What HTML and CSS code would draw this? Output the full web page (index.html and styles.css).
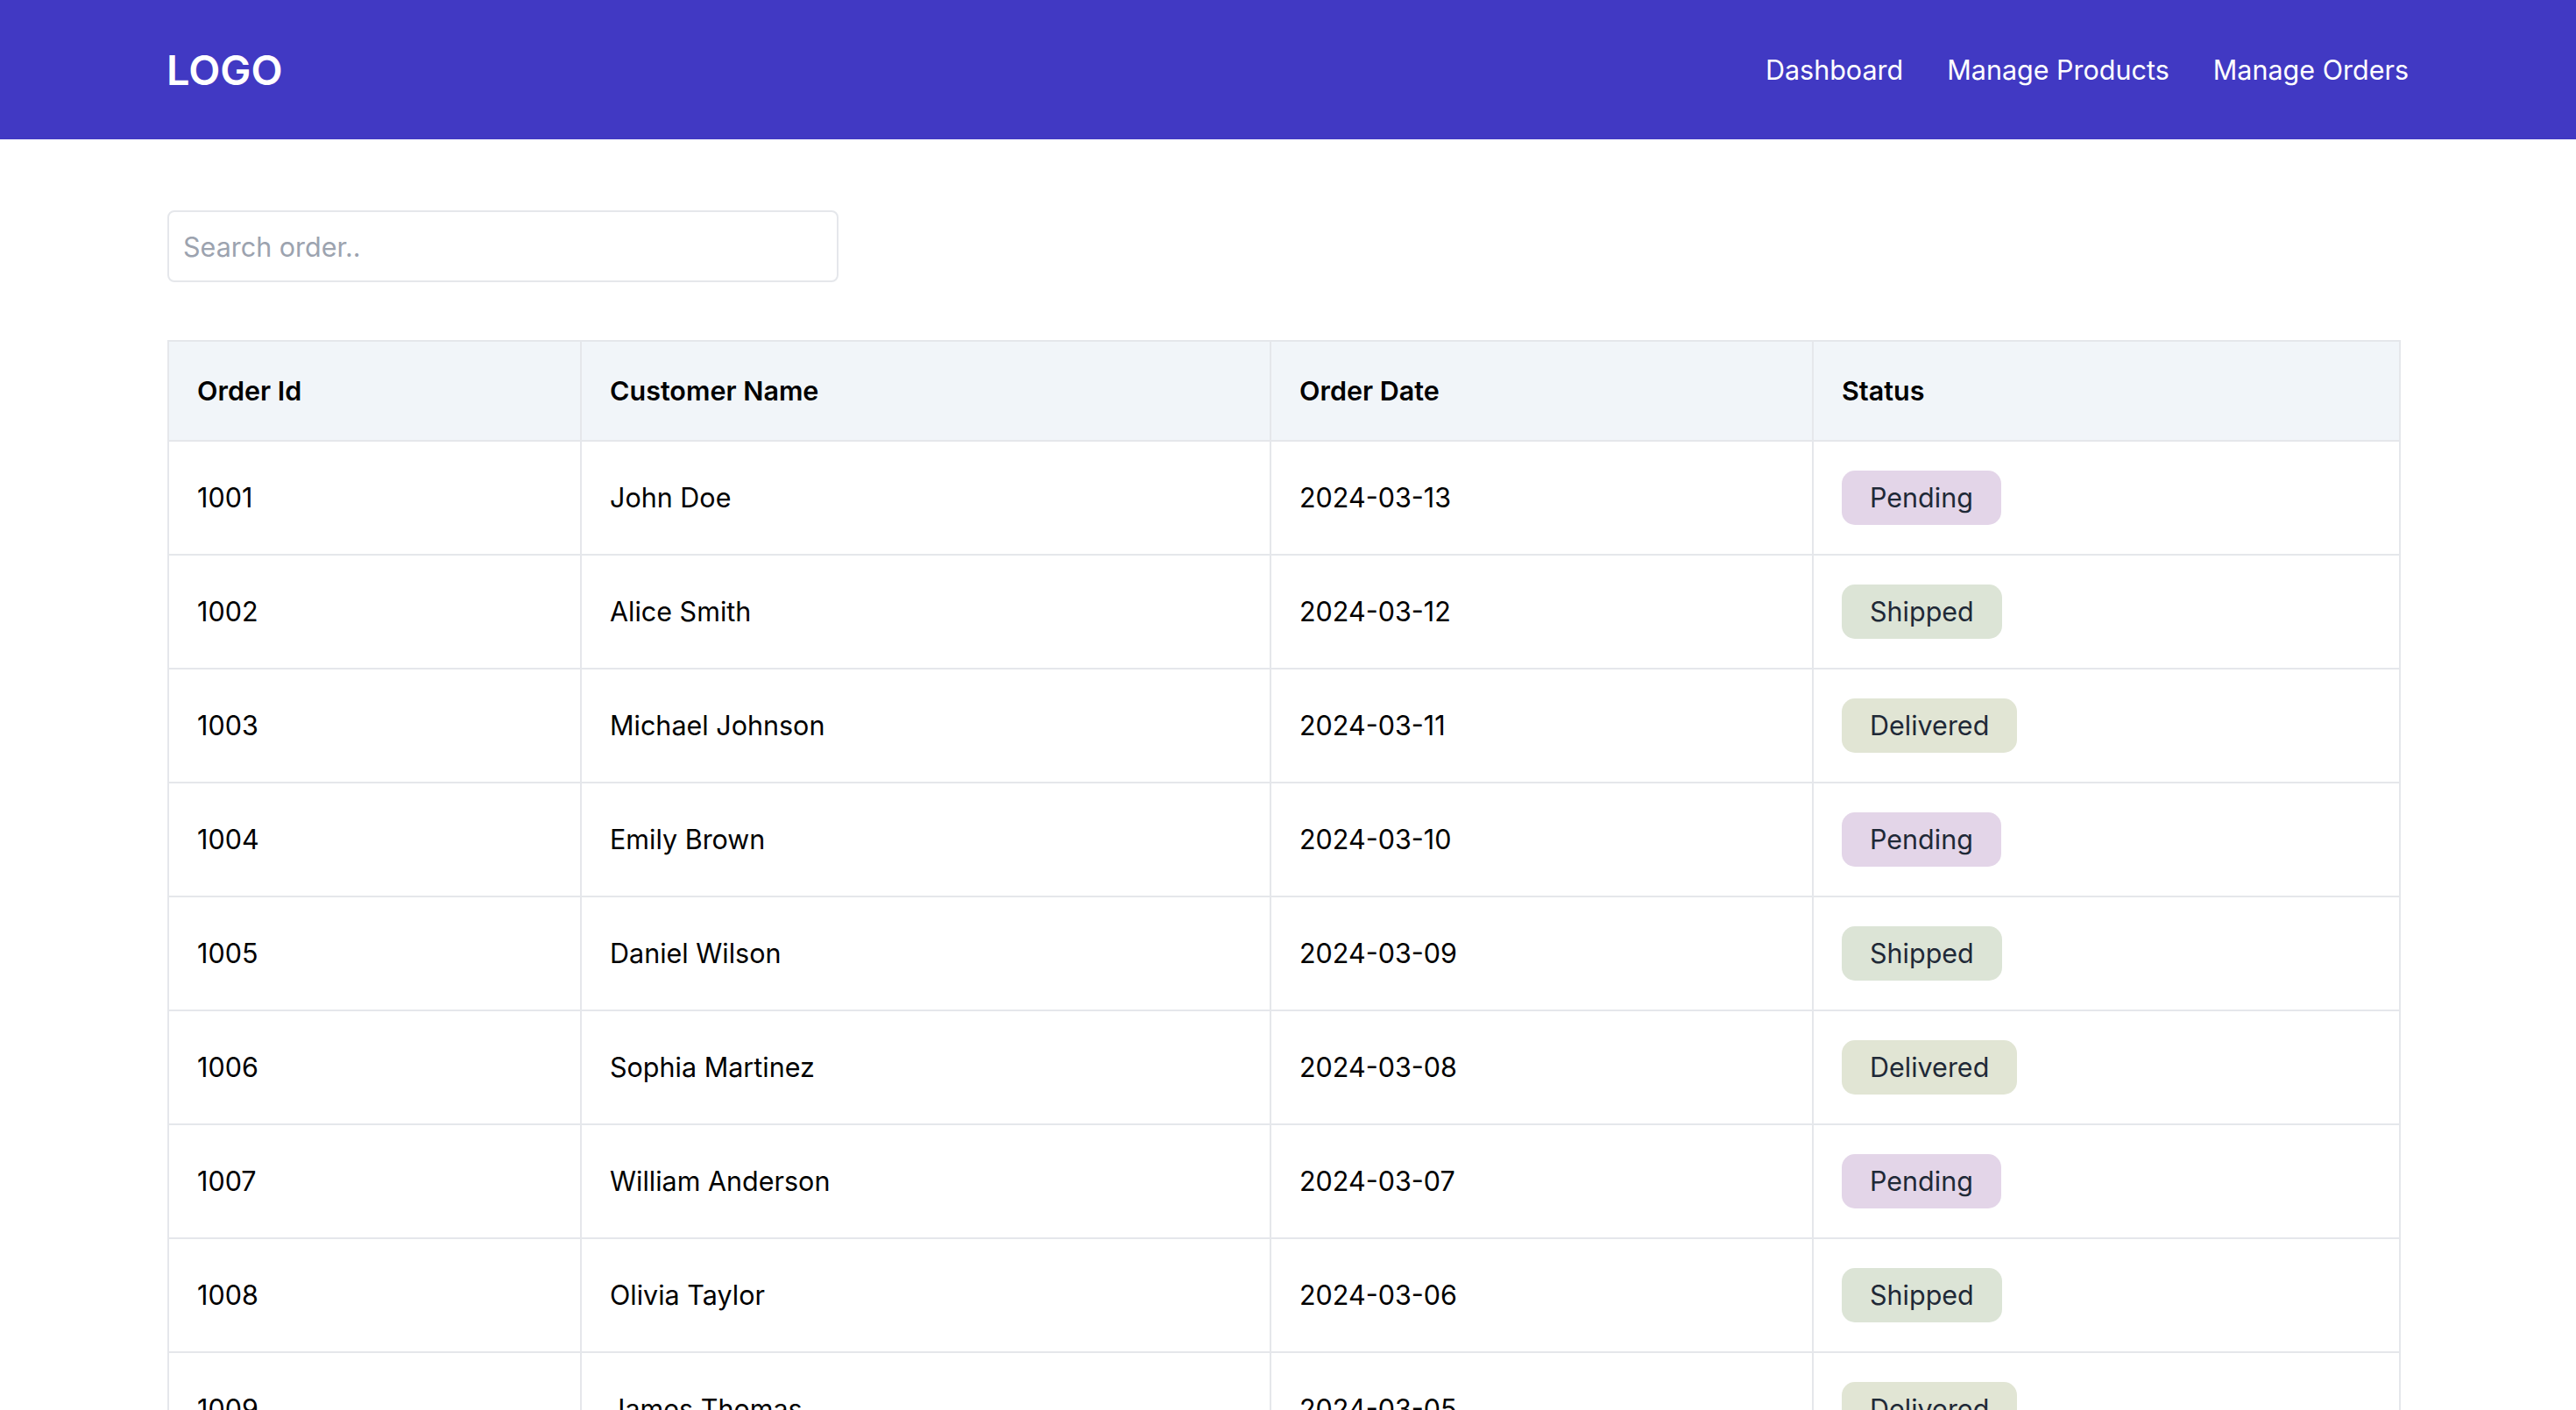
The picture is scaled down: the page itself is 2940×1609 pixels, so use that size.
FILE: index.html
```html
<!DOCTYPE html>
<html lang="en">
<head>
<meta charset="utf-8">
<title>Manage Orders</title>
<link rel="stylesheet" href="styles.css">
</head>
<body>
<header class="topbar">
  <div class="logo">LOGO</div>
  <nav class="nav">
    <a class="nav-link" href="#">Dashboard</a>
    <a class="nav-link" href="#">Manage Products</a>
    <a class="nav-link" href="#">Manage Orders</a>
  </nav>
</header>
<main class="main">
  <input class="search" type="text" placeholder="Search order..">
  <table class="orders">
    <colgroup>
      <col class="c1"><col class="c2"><col class="c3"><col class="c4">
    </colgroup>
    <thead>
      <tr><th>Order Id</th><th>Customer Name</th><th>Order Date</th><th>Status</th></tr>
    </thead>
    <tbody>
      <tr><td>1001</td><td>John Doe</td><td>2024-03-13</td><td><span class="badge pending">Pending</span></td></tr>
      <tr><td>1002</td><td>Alice Smith</td><td>2024-03-12</td><td><span class="badge shipped">Shipped</span></td></tr>
      <tr><td>1003</td><td>Michael Johnson</td><td>2024-03-11</td><td><span class="badge delivered">Delivered</span></td></tr>
      <tr><td>1004</td><td>Emily Brown</td><td>2024-03-10</td><td><span class="badge pending">Pending</span></td></tr>
      <tr><td>1005</td><td>Daniel Wilson</td><td>2024-03-09</td><td><span class="badge shipped">Shipped</span></td></tr>
      <tr><td>1006</td><td>Sophia Martinez</td><td>2024-03-08</td><td><span class="badge delivered">Delivered</span></td></tr>
      <tr><td>1007</td><td>William Anderson</td><td>2024-03-07</td><td><span class="badge pending">Pending</span></td></tr>
      <tr><td>1008</td><td>Olivia Taylor</td><td>2024-03-06</td><td><span class="badge shipped">Shipped</span></td></tr>
      <tr><td>1009</td><td>James Thomas</td><td>2024-03-05</td><td><span class="badge delivered">Delivered</span></td></tr>
    </tbody>
  </table>
</main>
</body>
</html>
```
FILE: styles.css
```css
* { box-sizing: border-box; }
html, body { margin: 0; padding: 0; }
body {
  font-family: Inter, "Noto Sans", "Liberation Sans", sans-serif;
  color: #000;
  background: #fff;
}
.topbar {
  height: 159px;
  background: #4139c3;
  display: flex;
  align-items: center;
  justify-content: space-between;
  padding: 0 191px 0 190px;
}
.logo {
  color: #fff;
  font-size: 47px;
  font-weight: 600;
}
.nav {
  display: flex;
  gap: 50px;
}
.nav-link {
  color: #fff;
  text-decoration: none;
  font-size: 30.5px;
}
.main {
  padding: 81px 202px 0 191px;
}
.search {
  display: block;
  width: 766px;
  height: 82px;
  border: 2px solid #e5e7eb;
  border-radius: 8px;
  padding: 0 16px;
  font-family: inherit;
  font-size: 30.5px;
  color: #111;
  outline: none;
}
.search::placeholder { color: #9ca3af; }
.orders {
  margin-top: 66px;
  width: 2547px;
  border-collapse: collapse;
  table-layout: fixed;
  border: 2px solid #e5e7eb;
}
.c1 { width: 471px; }
.c2 { width: 787px; }
.c3 { width: 619px; }
.c4 { width: 670px; }
.orders th, .orders td {
  border: 2px solid #e5e7eb;
  text-align: left;
  font-size: 30.5px;
  vertical-align: middle;
}
.orders th {
  background: #f1f5f9;
  font-weight: 600;
  line-height: 44px;
  padding: 34px 32px;
}
.orders td {
  line-height: 42px;
  padding: 33px 32px;
}
.badge {
  display: inline-block;
  padding: 10px 32px;
  border-radius: 15px;
  line-height: 42px;
  color: #1f2937;
}
.pending { background: #e3d5e8; }
.shipped { background: #dce4d6; }
.delivered { background: #e1e5d4; }
```
